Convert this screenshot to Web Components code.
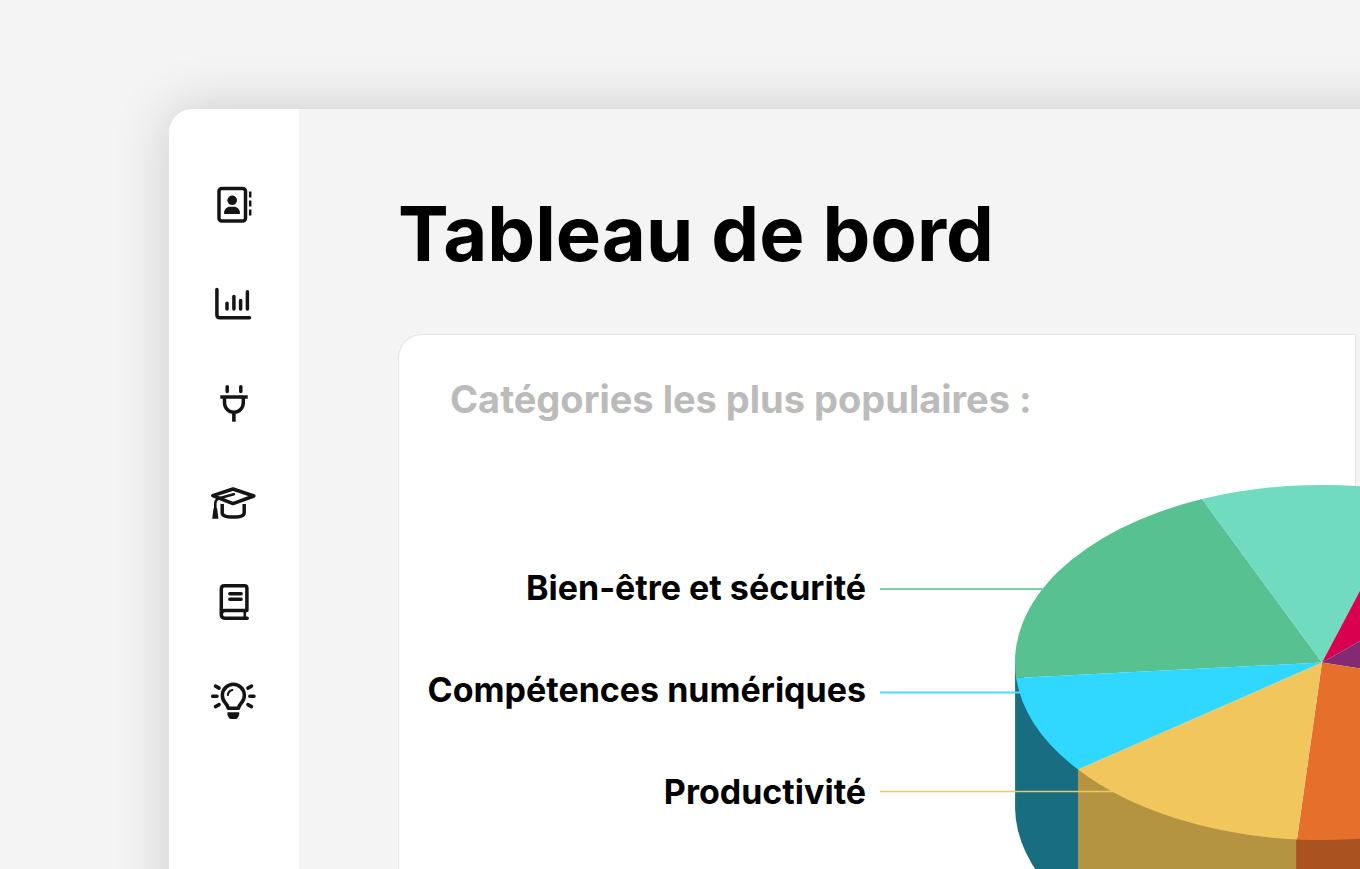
<!DOCTYPE html>
<html lang="fr">
<head>
<meta charset="utf-8">
<meta name="viewport" content="width=device-width, initial-scale=1">
<title>Tableau de bord</title>
<style>
body { margin: 0; background: #f4f4f4; font-family: Inter, "Liberation Sans", sans-serif; color: #000; }
</style>
</head>
<body>
<dash-window>
  <dash-nav slot="nav"></dash-nav>
  <dash-card heading="Catégories les plus populaires :">
    <pie-chart>
      <li>Bien-être et sécurité</li>
      <li>Compétences numériques</li>
      <li>Productivité</li>
    </pie-chart>
  </dash-card>
</dash-window>

<template id="window-t">
  <style>
    :host { display: block; box-sizing: border-box; height: 100vh; padding: 109px 0 0 169px; overflow: hidden; }
    .window { display: flex; min-height: 100%; margin-right: -80px; background: #f4f4f4; border-top-left-radius: 24px; box-shadow: 0 0 56px rgba(0, 0, 0, .17); }
    main { flex: 1; min-width: 0; padding: 76px 84px 0 99px; }
    h1 { margin: 0 0 53px; font-size: 76px; line-height: 96px; font-weight: 650; white-space: nowrap; }
  </style>
  <div class="window">
    <slot name="nav"></slot>
    <main>
      <h1>Tableau de bord</h1>
      <slot></slot>
    </main>
  </div>
</template>

<template id="nav-t">
  <style>
    :host { display: block; flex: none; width: 130px; background: #fff; border-top-left-radius: 24px; }
    nav { display: flex; flex-direction: column; align-items: center; gap: 51px; padding: 72px 0; }
    a { display: block; width: 48px; height: 48px; margin-right: 2px; color: #141414; }
    svg { display: block; fill: none; stroke: currentColor; stroke-width: 3.5; stroke-linecap: round; stroke-linejoin: round; }
    .solid { fill: currentColor; stroke: none; }
  </style>
  <nav aria-label="Navigation principale">
    <a href="#contacts" aria-label="Contacts">
      <svg width="48" height="48" viewBox="0 0 48 48">
        <rect x="10" y="7.400" width="26.5" height="32.600" rx="2.8"/>
        <circle class="solid" cx="23.200" cy="19.300" r="4.800"/>
        <path class="solid" d="M15 32.300c0-4 3-6.500 6-6.500h4c3 0 6 2.500 6 6.500q0 .8-.8.8H15.800q-.8 0-.8-.8z"/>
        <path stroke-width="2.500" stroke-linecap="butt" d="M41.200 10.500v6M41.200 19.500v6M41.200 28.500v6"/>
      </svg>
    </a>
    <a href="#statistiques" aria-label="Statistiques">
      <svg width="48" height="48" viewBox="0 0 48 48">
        <path d="M7.900 9.500V34.700q0 3 3 3H40.500"/>
        <path stroke-width="3.500" d="M18 23.200v5.800M24.900 16.500v12.500M31.600 20.500v8.500M38.400 11.800v17.200"/>
      </svg>
    </a>
    <a href="#integrations" aria-label="Intégrations">
      <svg width="48" height="48" viewBox="0 0 48 48">
        <path stroke-width="3.500" d="M18.200 7.800v4.600M31.800 7.800v4.600"/>
        <path stroke-linecap="butt" d="M11.300 18h27.400M15.500 19v4.800a9.400 9.400 0 0 0 18.800 0V19"/>
        <path stroke-width="3.600" stroke-linecap="butt" d="M24.900 33v9.700"/>
      </svg>
    </a>
    <a href="#formations" aria-label="Formations">
      <svg width="48" height="48" viewBox="0 0 48 48">
        <path d="M3.800 17.600 24 11l20.800 7L24 25.600z"/>
        <path stroke-width="2.600" d="M24.800 16.200 11 20.100q-4.500 1.500-4.700 5V31"/>
        <path class="solid" d="M4.500 30.500q1.800-2 3.600 0L9.400 40.700H3.200z"/>
        <path stroke-linecap="butt" d="M13.200 26v8.700q0 4.400 11 4.400t11-4.400V26"/>
      </svg>
    </a>
    <a href="#catalogue" aria-label="Catalogue">
      <svg width="48" height="48" viewBox="0 0 48 48">
        <path d="M37.900 33.400V11.200q0-2.500-2.500-2.500H15.500q-3.200 0-3.200 3.200V37.500q0 3.700 3.500 3.700H38.200M12.300 37.300q0-3.900 3.700-3.900H37.900"/>
        <path stroke-width="2.600" d="M35.800 34v7"/>
        <path d="M20.800 16.700h11.300M20.800 22.300h11.300"/>
      </svg>
    </a>
    <a href="#idees" aria-label="Idées">
      <svg width="48" height="48" viewBox="0 0 48 48">
        <path d="M19.300 32.300q-.5-2.600-3.300-5.800a11 11 0 1 1 16.700 0q-2.800 3.200-3.300 5.800z"/>
        <path stroke-width="2.200" d="M18.900 19q.4-4 4.400-5"/>
        <path class="solid" d="M18.400 36.200h11.800v2.300q-1.200 4.300-3.500 4.500h-4.800q-2.300-.2-3.500-4.500z"/>
        <path d="M3.600 20.300h4.400M40.800 20.300h4.200M6.500 10.100l3.600 2M6.500 30.600l3.600-2M42.500 10.100l-3.600 2M42.500 30.600l-3.600-2"/>
      </svg>
    </a>
  </nav>
</template>

<template id="card-t">
  <style>
    :host { display: block; padding-top: 40px; background: #fff; border: 1px solid #e4e4e4; border-top-left-radius: 24px; }
    h2 { margin: 0 0 57px; padding-left: 51px; font-size: 38px; line-height: 48px; font-weight: 650; color: #bbb; white-space: nowrap; }
  </style>
  <h2></h2>
  <slot></slot>
</template>

<template id="pie-t">
  <style>
    :host { display: flex; gap: 14px; }
    ul { flex: none; box-sizing: border-box; width: 467px; margin: 0; padding: 57px 0 0; list-style: none; }
    ::slotted(li) { font-size: 34px; line-height: 102px; font-weight: 650; text-align: right; white-space: nowrap; }
    svg { display: block; flex: none; }
  </style>
  <ul><slot></slot></ul>
  <svg width="750" height="510" viewBox="0 0 750 510" role="img" aria-label="Catégories les plus populaires">
    <path fill="#186d80" d="M135 182.500 198 289V433.500A307 177.500 0 0 1 135 326.500z"/>
    <path fill="#2a8664" d="M135 182.500h1.200v150q-1.200-3-1.200-6z"/>
    <path fill="#b49341" d="M198 288 417 358V503.500A307 177.500 0 0 1 198 433.500z"/>
    <path fill="#aa5320" d="M416.200 358 749 182.500V326.500A307 177.500 0 0 1 416.200 503.500z"/>
    <path fill="#57c191" d="M442 182.500 136.100 198A307 177.500 0 0 1 322 19.100z"/>
    <path fill="#70dbbf" d="M442 182.500 322 19.100A307 177.500 0 0 1 532 12.800z"/>
    <path fill="#d9004f" d="M442 182.500 532 12.800A307 177.500 0 0 1 661 58z"/>
    <path fill="#822b73" d="M442 182.500 661 58A307 177.500 0 0 1 738 229z"/>
    <path fill="#e56f2b" d="M442 182.500 738 229A307 177.500 0 0 1 417 359.500z"/>
    <path fill="#f1c75d" d="M442 182.500 417 359.500A307 177.500 0 0 1 198 289.500z"/>
    <path fill="#30d7ff" d="M442 182.500 198 289.500A307 177.500 0 0 1 136.200 198z"/>
    <path stroke="#7ad1aa" stroke-width="2" d="M0 109H163"/>
    <path stroke="#4bdcfc" stroke-width="2" d="M0 212.500H141"/>
    <path stroke="#eac76b" stroke-width="1.500" d="M0 311.500H235"/>
  </svg>
</template>

<script>
const stamp = (host, id) => {
  const root = host.attachShadow({ mode: "open" });
  root.append(document.getElementById(id).content.cloneNode(true));
  return root;
};
customElements.define("dash-window", class extends HTMLElement {
  constructor() { super(); stamp(this, "window-t"); }
});
customElements.define("dash-nav", class extends HTMLElement {
  constructor() { super(); stamp(this, "nav-t"); }
});
customElements.define("dash-card", class extends HTMLElement {
  constructor() { super(); stamp(this, "card-t"); }
  connectedCallback() {
    this.shadowRoot.querySelector("h2").textContent = this.getAttribute("heading");
  }
});
customElements.define("pie-chart", class extends HTMLElement {
  constructor() { super(); stamp(this, "pie-t"); }
});
</script>
</body>
</html>
